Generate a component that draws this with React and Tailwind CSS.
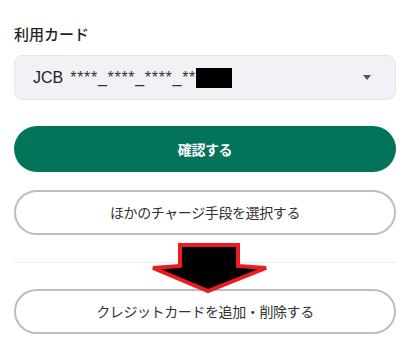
export default function App() {
  return (
    <div
      className="relative w-[410px] h-[352px] bg-white px-[14px] pt-[23px] overflow-hidden"
      style={{ fontFamily: '"Noto Sans", "Noto Sans CJK JP", sans-serif' }}
    >
      {/* Card selector */}
      <p className="text-[15px] leading-[22px] font-medium text-[#1f1f1f]">利用カード</p>
      <div className="mt-[10px] h-[45px] rounded-[9px] bg-[#f1f1f6] border border-[#e3e3ea] flex items-center pl-[18px] pr-[24px]">
        <span
          className="text-[16px] text-[#222] flex items-center"
          style={{ fontFamily: '"Liberation Sans", Arial, sans-serif' }}
        >
          JCB
          <span className="ml-[7px] tracking-[0.7px] text-[#333]">****_****_****_**</span>
          <span className="inline-block w-[36px] h-[20px] bg-black"></span>
        </span>
        <svg className="ml-auto" width="8" height="5" viewBox="0 0 8 5">
          <polygon points="0,0 8,0 4,5" fill="#555" />
        </svg>
      </div>

      {/* Actions */}
      <button className="mt-[26px] w-full h-[46px] rounded-full bg-[#03735a] text-white text-[14px] tracking-[-0.4px] font-bold">
        確認する
      </button>
      <button className="mt-[18px] w-full h-[45px] rounded-full border-2 border-[#bdbdc6] bg-white text-[#333] text-[14px] tracking-[-0.4px]">
        ほかのチャージ手段を選択する
      </button>

      <div className="mt-[27px] h-px bg-[#ececf0]"></div>

      <button className="mt-[26px] w-full h-[45px] rounded-full border-2 border-[#bdbdc6] bg-white text-[#333] text-[14px] tracking-[-0.4px]">
        クレジットカードを追加・削除する
      </button>

      {/* Annotation arrow */}
      <svg
        className="absolute left-[148px] top-[241px]"
        width="124"
        height="56"
        viewBox="0 0 124 56"
      >
        <polygon
          points="32,4 90,4 90,25 118,27 60,50 5,27 32,25"
          fill="#000"
          stroke="#ec1c24"
          strokeWidth="4"
          strokeLinejoin="miter"
        />
      </svg>
    </div>
  );
}
